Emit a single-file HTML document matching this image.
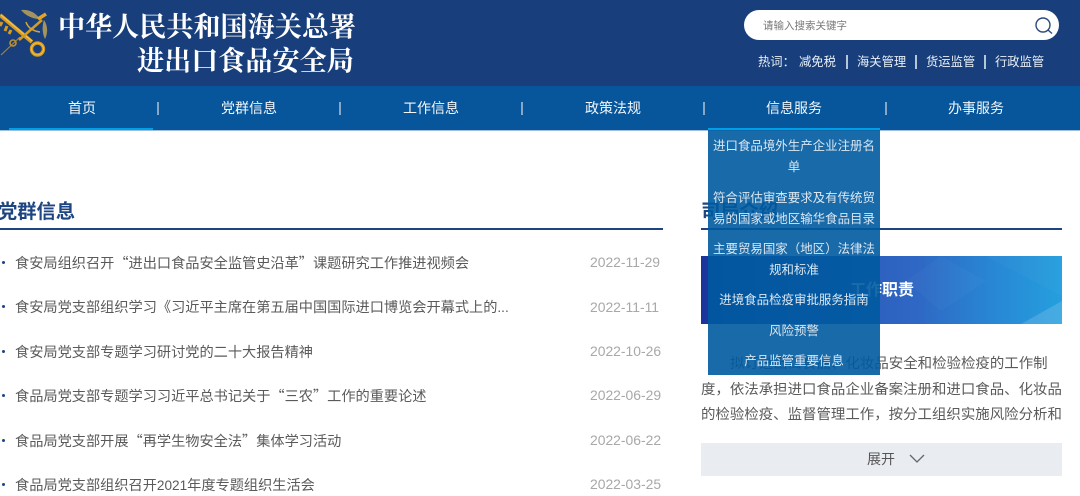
<!DOCTYPE html>
<html lang="zh"><head><meta charset="utf-8"><style>
html,body{margin:0;padding:0;width:1080px;height:495px;overflow:hidden;background:#fff;font-family:"Liberation Sans","Noto Sans CJK SC",sans-serif}
div,span{position:absolute;white-space:nowrap}
.hd{left:0;top:0;width:1080px;height:86px;background:#183f7b}
.nav{left:0;top:86px;width:1080px;height:45px;background:#07569b;border-bottom:1px solid #9cc0dc;box-sizing:border-box}
.t{font-family:"Noto Serif CJK SC",serif;font-weight:700;color:#fff;font-size:27.1px;line-height:36px;letter-spacing:0}
.n{top:86px;height:42px;line-height:44px;color:#f2f6fa;font-size:14px;text-align:center;width:182px}
.s{top:102px;width:2px;height:13px;background:#86a8c8}
.h{top:55px;line-height:14px;font-size:12.3px;color:#e9eff6}
.hs{top:55px;width:2px;height:14px;background:#b4c6da}
.li{left:15px;font-family:"Noto Sans CJK SC","Liberation Sans",sans-serif;font-size:14.2px;color:#5a5a5a;line-height:20px}
.li b{font-family:"Liberation Sans",sans-serif;font-weight:400;font-size:13.6px}
.dot{left:2px;width:3px;height:3px;border-radius:50%;background:#1b4585}
.d{left:590px;font-size:13.9px;color:#a8a8a8;line-height:20px}
.p{left:701px;font-family:"Noto Sans CJK SC",sans-serif;font-size:14.44px;color:#5a5a5a;line-height:20px}
.m{left:708px;width:172px;text-align:center;font-family:"Noto Sans CJK SC",sans-serif;font-size:12.46px;color:#dbe7f1;line-height:21px}
</style></head><body>
<div class="hd"></div>
<svg style="position:absolute;left:0;top:0" width="50" height="60" viewBox="0 0 50 60">
<path d="M1 55L20 37" stroke="#a9803a" stroke-width="1.2" fill="none"/>
<path d="M0 15L32 42" stroke="#d69a1f" stroke-width="4" fill="none"/>
<path d="M1 15L32 41" stroke="#f3c44e" stroke-width="1.2" fill="none"/>
<path d="M2 22L0 26M7 26L5 31M11 30L9 34" stroke="#d69a1f" stroke-width="3" fill="none"/>
<circle cx="37.500" cy="49" r="6" fill="none" stroke="#d3981f" stroke-width="3.4"/>
<circle cx="37.500" cy="49" r="6" fill="none" stroke="#f1c24a" stroke-width="1"/>
<path d="M42 20L19 40" stroke="#d69a1f" stroke-width="2.500" fill="none"/>
<circle cx="13" cy="43" r="3" fill="none" stroke="#b98f3c" stroke-width="1.600"/>
<path d="M21 10C29 9 36 13 40 19C33 19 26 16 21 10Z" fill="#a4935f"/>
<path d="M44 20C48 26 48 33 45 39C42 33 42 26 44 20Z" fill="#a4935f"/>
<path d="M26 22C28 28 33 31 40 32" stroke="#d5a53a" stroke-width="1.500" fill="none"/>
<path d="M38 19L46 14" stroke="#e0a526" stroke-width="3.500"/>
</svg>
<div class="t" style="left:58px;top:7px">中华人民共和国海关总署</div>
<div class="t" style="left:137px;top:41px">进出口食品安全局</div>
<div style="left:744px;top:10px;width:315px;height:30px;background:#fff;border-radius:15px"></div>
<div style="left:763px;top:19px;font-size:10.5px;line-height:15px;color:#777">请输入搜索关键字</div>
<svg style="position:absolute;left:1033px;top:15px" width="22" height="22" viewBox="0 0 22 22"><circle cx="10" cy="10" r="7" fill="none" stroke="#2a4a7c" stroke-width="1.400"/><path d="M15 15L19 18.500" stroke="#2a4a7c" stroke-width="1.400"/></svg>
<div class="h" style="left:758px">热词：</div>
<div class="h" style="left:799px">减免税</div><div class="hs" style="left:846px"></div>
<div class="h" style="left:857px">海关管理</div><div class="hs" style="left:915px"></div>
<div class="h" style="left:926px">货运监管</div><div class="hs" style="left:984px"></div>
<div class="h" style="left:995px">行政监管</div>
<div class="nav"></div>
<div style="left:9px;top:127.500px;width:144px;height:2.500px;background:#00a0e9"></div>
<div class="n" style="left:-9px">首页</div><div class="s" style="left:157px"></div>
<div class="n" style="left:158px">党群信息</div><div class="s" style="left:339px"></div>
<div class="n" style="left:340px">工作信息</div><div class="s" style="left:521px"></div>
<div class="n" style="left:522px">政策法规</div><div class="s" style="left:703px"></div>
<div class="n" style="left:703px">信息服务</div><div class="s" style="left:885px"></div>
<div class="n" style="left:885px">办事服务</div>

<div style="left:-2px;top:200px;font-size:19.300px;line-height:26px;font-weight:700;color:#1c4581">党群信息</div>
<div style="left:0;top:228px;width:663px;height:2px;background:#1c4581"></div>
<div class="dot" style="top:261px"></div><div class="li" style="top:253px">食安局组织召开“进出口食品安全监管史沿革”课题研究工作推进视频会</div><div class="d" style="top:252px">2022-11-29</div>
<div class="dot" style="top:305px"></div><div class="li" style="top:297px">食安局党支部组织学习《习近平主席在第五届中国国际进口博览会开幕式上的<b>...</b></div><div class="d" style="top:297px">2022-11-11</div>
<div class="dot" style="top:350px"></div><div class="li" style="top:342px">食安局党支部专题学习研讨党的二十大报告精神</div><div class="d" style="top:341px">2022-10-26</div>
<div class="dot" style="top:394px"></div><div class="li" style="top:386px">食品局党支部专题学习习近平总书记关于“三农”工作的重要论述</div><div class="d" style="top:385px">2022-06-29</div>
<div class="dot" style="top:439px"></div><div class="li" style="top:431px">食品局党支部开展“再学生物安全法”集体学习活动</div><div class="d" style="top:430px">2022-06-22</div>
<div class="dot" style="top:483px"></div><div class="li" style="top:475px">食品局党支部组织召开<b>2021</b>年度专题组织生活会</div><div class="d" style="top:474px">2022-03-25</div>

<div style="left:701px;top:200px;font-size:19.300px;line-height:26px;font-weight:700;color:#1c4581">司局介绍</div>
<div style="left:701px;top:228px;width:361px;height:2px;background:#1c4581"></div>
<svg style="position:absolute;left:701px;top:256px" width="361" height="68" viewBox="0 0 361 68">
<defs><linearGradient id="g" x1="0" x2="1" y1="0" y2="0"><stop offset="0" stop-color="#1a349c"/><stop offset=".3" stop-color="#2c55b6"/><stop offset=".6" stop-color="#2f68c4"/><stop offset=".8" stop-color="#2886d4"/><stop offset="1" stop-color="#259fde"/></linearGradient></defs>
<rect width="361" height="68" fill="url(#g)"/>
<path d="M240 0L285 25L240 55L205 25Z" fill="#fff" fill-opacity=".025"/>
<path d="M285 0L361 40L361 0Z" fill="#fff" fill-opacity=".025"/>
<path d="M320 68L361 45L361 68Z" fill="#fff" fill-opacity=".15"/>
</svg>
<div style="left:850px;top:280px;font-size:16px;line-height:22px;font-weight:700;color:#fff">工作职责</div>
<div class="p" style="left:730px;top:353px">拟订进出口食品、化妆品安全和检验检疫的工作制</div>
<div class="p" style="top:379px">度，依法承担进口食品企业备案注册和进口食品、化妆品</div>
<div class="p" style="top:404px">的检验检疫、监督管理工作，按分工组织实施风险分析和</div>
<div style="left:701px;top:443px;width:361px;height:33px;background:#e9ecf0"></div>
<div style="left:867px;top:449px;font-size:14px;line-height:21px;color:#555">展开</div>
<svg style="position:absolute;left:908px;top:453px" width="18" height="12" viewBox="0 0 18 12"><path d="M2 2L9 9L16 2" fill="none" stroke="#666" stroke-width="1.300"/></svg>

<div style="left:708px;top:128px;width:172px;height:247px;background:rgba(0,90,160,.9)"></div>
<div style="left:708px;top:127.500px;width:172px;height:2.500px;background:#00a0e9"></div>
<div class="m" style="top:135px">进口食品境外生产企业注册名</div>
<div class="m" style="top:156px">单</div>
<div class="m" style="top:187px">符合评估审查要求及有传统贸</div>
<div class="m" style="top:208px">易的国家或地区输华食品目录</div>
<div class="m" style="top:238px">主要贸易国家（地区）法律法</div>
<div class="m" style="top:259px">规和标准</div>
<div class="m" style="top:289px">进境食品检疫审批服务指南</div>
<div class="m" style="top:320px">风险预警</div>
<div class="m" style="top:350px">产品监管重要信息</div>
</body></html>
